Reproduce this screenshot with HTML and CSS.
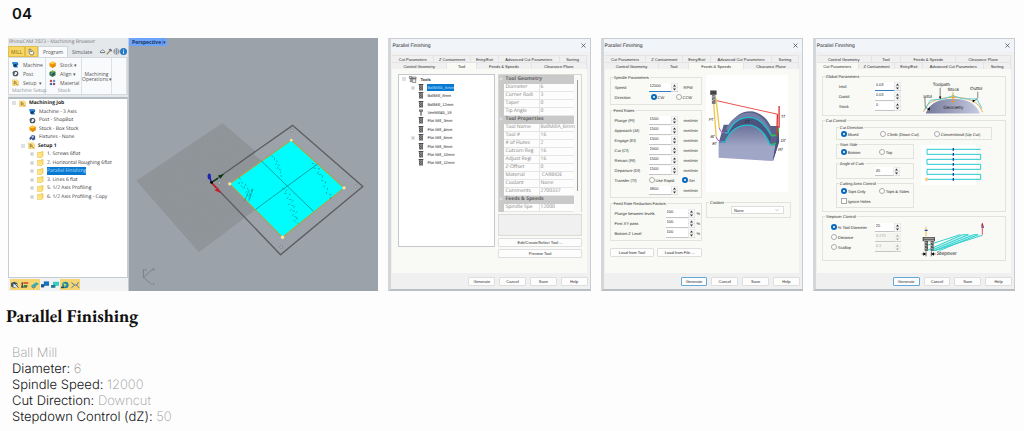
FILE: index.html
```html
<!DOCTYPE html>
<html lang="en">
<head>
<meta charset="utf-8">
<title>04 Parallel Finishing</title>
<link rel="stylesheet" href="styles.css">
</head>
<body>
<svg class="defs" aria-hidden="true">
  <symbol id="machine" viewBox="0 0 16 16"><path d="M1 2h9l4 2v5l-3 1 3 4-8 1-4-3 1-3-2-2z" fill="#1769b5"/><path d="M3 3h8v3H3z" fill="#43a5e6"/><path d="M3 10l5-3 3 3-4 3z" fill="#12345c"/></symbol>
  <symbol id="post" viewBox="0 0 16 16"><circle cx="8" cy="8" r="5" fill="none" stroke="#4d5564" stroke-width="3"/><path d="M1 5l5-3 2 4-4 4zM9 9l5 1-3 4z" fill="#59616e"/><circle cx="9" cy="7" r="2.500" fill="#eef1f6"/></symbol>
  <symbol id="box" viewBox="0 0 16 16"><path d="M1 5l7-4 7 3v8l-7 4-7-4z" fill="#f5a312"/><path d="M1 5l7 3 7-4v8l-7 4z" fill="#e88b06"/><path d="M1 5l7-4 7 3-7 4z" fill="#ffc84a"/></symbol>
  <symbol id="align" viewBox="0 0 16 16"><path d="M1 5l7-4 7 3v8l-7 4-7-4z" fill="#3b7d3e"/><path d="M4 6h8v6H4z" fill="#254a67"/><path d="M2 4l6-3 6 3-6 2z" fill="#84b440"/><circle cx="6" cy="8" r="2" fill="#4fa8d8"/></symbol>
  <symbol id="setup" viewBox="0 0 16 16"><path d="M1 2h10l4 3v10H1z" fill="#ffe286" stroke="#ebb83c"/><path d="M5 5l5 3-5 4zM9 11l4 2" fill="none" stroke="#6f5625" stroke-width="1.500"/></symbol>
  <symbol id="material" viewBox="0 0 16 16"><path d="M2 2h5v5H2z" fill="#d84747"/><path d="M9 2h5v5H9z" fill="#5a91d2"/><path d="M2 9h5v5H2z" fill="#4768a9"/><path d="M9 9h5v5H9z" fill="#8d4c81"/></symbol>
  <symbol id="fixture" viewBox="0 0 16 16"><path d="M1 9l6-7 7 2v8l-5 3-3-4-4 3z" fill="#344b84"/><path d="M5 6l4-3 3 4-4 3z" fill="#aebbe0"/></symbol>
  <symbol id="folder" viewBox="0 0 16 16"><path d="M1 3h8l1-2h4v11l-3 3H1z" fill="#f8d668" stroke="#e5bc43"/><path d="M2 5h9v9H2z" fill="#ffe384"/></symbol>
  <symbol id="plus" viewBox="0 0 10 10"><path d="M1 1h8v8H1z" fill="#fff" stroke="#b5b9c0"/><path d="M2.500 5h5M5 2.500v5" stroke="#65707f"/></symbol>
  <symbol id="minus" viewBox="0 0 10 10"><path d="M1 1h8v8H1z" fill="#fff" stroke="#a5a9b0"/><path d="M2.500 5h5" stroke="#55606f"/></symbol>
  <symbol id="mill" viewBox="0 0 14 18"><path d="M1 0h12v3H1zM2 4h10v13H2z" fill="#484848"/><path d="M3 9l7-5M3 14l8-6M6 17l5-4" stroke="#e6e6e6" stroke-width="1.500"/></symbol>
  <symbol id="vee" viewBox="0 0 14 18"><path d="M2 1h10v6H9v9l-2 2-2-2V7H2z" fill="#666"/><path d="M5 2v4M9 2v4M7 8v7" stroke="#eee"/></symbol>
  <symbol id="tools" viewBox="0 0 20 18"><path d="M1 1h6v5H1zM3 6h3v9H3zM8 3h10v4H8zM9 7h8v10H9z" fill="#eee" stroke="#444" stroke-width="1.500"/></symbol>
  <symbol id="spin" viewBox="0 0 14 18"><path d="M.5.500h13v17H.5z" fill="#f8f8f8" stroke="#d0d0d0"/><path d="M0 9h14" stroke="#d5d5d5"/><path d="M7 3l3 4H4zM7 15l3-4H4z" fill="#333"/></symbol>
  <symbol id="close" viewBox="0 0 10 10"><path d="M1 1l8 8M9 1L1 9" stroke="#333" stroke-width="1.300"/></symbol>
</svg>

<p class="page-no">04</p>

<main class="shots">
  <section class="cam">
    <div class="browser">
      <p class="browser-title">RhinoCAM 2023 - Machining Browser</p>
      <nav class="ribbon-tabs">
        <button class="mill-tab">MILL</button>
        <button class="mill-tab"><svg viewBox="0 0 20 20"><path d="M3 2h5v8l5-3 4 5-3 6H8l-4-5z" fill="#fff" stroke="#4c5a70" stroke-width="2"/></svg></button>
        <button class="active">Program</button>
        <button>Simulate</button>
        <span class="tool-icons">
          <svg viewBox="0 0 20 20"><path d="M4 13V9l6-4 6 4v4zM3 13h14" fill="none" stroke="#68717d" stroke-width="2"/></svg>
          <svg viewBox="0 0 20 20"><path d="M2 18L12 7" stroke="#9c7a3f" stroke-width="3"/><path d="M7 3l7-1 4 6-4 3-3-4z" fill="#697383"/></svg>
          <svg viewBox="0 0 20 20"><circle cx="10" cy="10" r="8" fill="#eef0f2" stroke="#777f88" stroke-width="2"/><path d="M4 8h12v4H4zM10 2v16" fill="none" stroke="#777f88" stroke-width="2"/></svg>
          <svg viewBox="0 0 20 20"><circle cx="10" cy="10" r="10" fill="#2379ca"/><path d="M10 4v3M10 9v7" stroke="#fff" stroke-width="2.500"/></svg>
        </span>
      </nav>
      <div class="ribbon">
        <div class="ribbon-group">
          <button><svg><use href="#machine"/></svg>Machine</button>
          <button><svg><use href="#post"/></svg>Post</button>
          <button><svg><use href="#setup"/></svg>Setup&nbsp; ▾</button>
          <span class="group-name">Machine Setup</span>
        </div>
        <div class="ribbon-group">
          <button><svg><use href="#box"/></svg>Stock ▾</button>
          <button><svg><use href="#align"/></svg>Align ▾</button>
          <button><svg><use href="#material"/></svg>Material</button>
          <span class="group-name">Stock</span>
        </div>
        <div class="ribbon-group ops"><button>Machining<br>Operations ▾</button></div>
        <div class="ribbon-group"></div>
      </div>
      <ul class="job-tree">
        <li class="strong"><svg class="exp"><use href="#minus"/></svg><svg><use href="#setup"/></svg><span>Machining Job</span></li>
        <li class="l1"><svg><use href="#machine"/></svg><span>Machine - 3 Axis</span></li>
        <li class="l1"><svg><use href="#post"/></svg><span>Post - ShopBot</span></li>
        <li class="l1"><svg><use href="#box"/></svg><span>Stock - Box Stock</span></li>
        <li class="l1"><svg><use href="#fixture"/></svg><span>Fixtures - None</span></li>
        <li class="l1 strong has-exp"><svg class="exp"><use href="#minus"/></svg><svg><use href="#setup"/></svg><span>Setup 1</span></li>
        <li class="l2"><svg class="exp"><use href="#plus"/></svg><svg><use href="#folder"/></svg><span>1. Screws 6flat</span></li>
        <li class="l2"><svg class="exp"><use href="#plus"/></svg><svg><use href="#folder"/></svg><span>2. Horizontal Roughing 6flat</span></li>
        <li class="l2"><svg class="exp"><use href="#plus"/></svg><svg><use href="#folder"/></svg><span class="picked">Parallel Finishing</span></li>
        <li class="l2"><svg class="exp"><use href="#plus"/></svg><svg><use href="#folder"/></svg><span>3. Lines 6 flat</span></li>
        <li class="l2"><svg class="exp"><use href="#plus"/></svg><svg><use href="#folder"/></svg><span>5. 1/2 Axis Profiling</span></li>
        <li class="l2"><svg class="exp"><use href="#plus"/></svg><svg><use href="#folder"/></svg><span>6. 1/2 Axis Profiling - Copy</span></li>
      </ul>
      <div class="status-tools">
        <button class="on"><svg viewBox="0 0 24 20"><path d="M2 5l8-3 8 3v9l-8 4-8-4z" fill="#46586b"/><path d="M8 8h9v8H8z" fill="#d8e7ef"/><path d="M10 5l11 12" stroke="#345" stroke-width="2"/></svg></button>
        <button class="on"><svg viewBox="0 0 24 20"><path d="M2 15h15M5 3v14" stroke="#334" stroke-width="3"/><path d="M8 3h12v4H8z" fill="#d2452c"/><path d="M9 10h9v5H9z" fill="#358348"/></svg></button>
        <button class="on"><svg viewBox="0 0 24 20"><path d="M2 12L15 3l7 4-13 10z" fill="#3aabb3"/><path d="M3 14l5 4 6-4" stroke="#566" stroke-width="2" fill="none"/></svg></button>
        <button><svg viewBox="0 0 24 20"><path d="M9 1h13v11H9z" fill="#1672bb"/><path d="M2 8h8v8H2z" fill="#245084"/></svg></button>
        <button><svg viewBox="0 0 24 20"><path d="M7 2h15v10H7z" fill="#35cfc1"/><path d="M2 10h11v7H2z" fill="#247b91"/></svg></button>
        <button class="on"><svg viewBox="0 0 24 20"><circle cx="13" cy="10" r="8" fill="#2286a1"/><path d="M8 5l8 3-5 8z" fill="#b6dc73"/><path d="M2 14h8v4H2z" fill="#345"/></svg></button>
        <button class="on"><svg viewBox="0 0 24 20"><path d="M3 4l8 6-8 7M11 10h5l5-7M16 10l6 7" fill="none" stroke="#52749a" stroke-width="2.500"/></svg></button>
      </div>
    </div>
    <div class="viewport">
      <button class="view-name">Perspective <span>▾</span></button>
      <svg viewBox="13 25 744 753" preserveAspectRatio="xMidYMid slice" role="img" aria-label="Perspective view of the part">
        <defs>
          <pattern id="mesh" width="8" height="8" patternUnits="userSpaceOnUse" patternTransform="matrix(.82 -.56 .72 .8 0 0)"><rect width="8" height="8" fill="#91969b"/><path d="M0 0h8M0 0v8" stroke="#858a8f"/></pattern>
        </defs>
        <path d="M36 450L292 278L500 455L222 663Z" fill="url(#mesh)"/>
        <path d="M259 455L501 285L710 467L465 670Z" fill="#9ba2aa" />
        <path d="M259 455L382 369L412 392L314 459L390 536L360 558Z" fill="#8f9499"/>
        <path d="M259 455L501 285L710 467L465 670Z" fill="none" stroke="#5d5c61" stroke-width="4"/>
        <path d="M497 329L654 471L471 618L314 459Z" fill="#00fdfd" stroke="#b6a13c" stroke-width="3"/>
        <path d="M409 392L563 541M571 403L391 535" stroke="#078f92" stroke-width="2.500"/>
        <g fill="none" stroke="#007f86" stroke-width="1.600">
          <path d="M438 376l9 3 0 10 10 4-7 9 12 2-8 10 13 3-3 12 7 13" stroke-dasharray="7 5"/>
          <path d="M470 472l14 4-8 11 18 3-10 14 20 4-15 13 21 4-17 13 22 4-16 12 19 6-14 8 14 9" stroke-dasharray="8 6"/>
          <path d="M558 398l16 3-9 12 16 1-7 17 17 1-4 17 13 4-7 13 13 7-5 15 15 4-3 13" stroke-dasharray="8 6"/>
          <path d="M342 440l10 17-12-1 16 18 4-15 10 20-9 5 9 14 12-26-12 32 12-7" stroke-dasharray="8 6"/>
          <path d="M372 478l-14 32M383 475l-12 35"/>
        </g>
        <g fill="#ffe3a0"><circle cx="497" cy="329" r="4"/><circle cx="654" cy="471" r="5"/><circle cx="471" cy="618" r="5"/><circle cx="314" cy="459" r="5"/></g>
        <g fill="#c3c5c9" stroke="#747980" stroke-width="2"><circle cx="499" cy="300" r="4"/><circle cx="688" cy="467" r="4"/><circle cx="467" cy="647" r="4"/><circle cx="283" cy="456" r="4"/></g>
        <path d="M259 455l-5-18" stroke="#2727a5" stroke-width="5"/><ellipse cx="253" cy="437" rx="5" ry="9" fill="#2424b4"/>
        <path d="M259 455l20-12" stroke="#073e12" stroke-width="4"/><path d="M297 430l-11 14-7-10z" fill="#06370d"/>
        <path d="M259 455l15 16" stroke="#c92026" stroke-width="5"/><path d="M289 487l-20-8 9-10z" fill="#cb2027"/><circle cx="260" cy="455" r="4"/>
        <path d="M57 713v24l24 21M57 737l28-24" fill="none" stroke="#6c7177" stroke-width="2"/>
        <g class="axis"><text x="60" y="717">z</text><text x="85" y="716">y</text><text x="84" y="759">x</text></g>
      </svg>
    </div>
  </section>

  <section class="dialog">
    <header><h2>Parallel Finishing</h2><button aria-label="Close"><svg><use href="#close"/></svg></button></header>
    <nav class="tabs"><div class="five"><button>Cut Parameters</button><button>Z Containment</button><button>Entry/Exit</button><button>Advanced Cut Parameters</button><button>Sorting</button></div><div class="four"><button>Control Geometry</button><button class="active">Tool</button><button>Feeds &amp; Speeds</button><button>Clearance Plane</button></div></nav>
    <div class="pane tool-pane">
      <div class="tool-box"><ul class="tool-tree">
        <li class="root"><svg class="exp"><use href="#minus"/></svg><svg class="wide"><use href="#tools"/></svg><span>Tools</span></li>
        <li><svg class="exp"><use href="#plus"/></svg><svg><use href="#mill"/></svg><span class="picked">BallMillA_6mm</span></li>
        <li><svg class="exp"></svg><svg><use href="#mill"/></svg><span>BallMill_8mm</span></li>
        <li><svg class="exp"></svg><svg><use href="#mill"/></svg><span>BallMill_12mm</span></li>
        <li><svg class="exp"></svg><svg><use href="#vee"/></svg><span>VeeMill45_19</span></li>
        <li><svg class="exp"></svg><svg><use href="#mill"/></svg><span>Flat Mill_3mm</span></li>
        <li><svg class="exp"></svg><svg><use href="#mill"/></svg><span>Flat Mill_4mm</span></li>
        <li><svg class="exp"><use href="#plus"/></svg><svg><use href="#mill"/></svg><span>Flat Mill_6mm</span></li>
        <li><svg class="exp"></svg><svg><use href="#mill"/></svg><span>Flat Mill_8mm</span></li>
        <li><svg class="exp"></svg><svg><use href="#mill"/></svg><span>Flat Mill_10mm</span></li>
        <li><svg class="exp"></svg><svg><use href="#mill"/></svg><span>Flat Mill_12mm</span></li>
      </ul></div>
      <div class="tool-side">
        <div class="props-wrap">
        <table class="props">
          <tr class="sec"><th><svg><use href="#minus"/></svg></th><th colspan="2">Tool Geometry</th></tr>
          <tr><th></th><td>Diameter</td><td>6</td></tr>
          <tr><th></th><td>Corner Radi</td><td>3</td></tr>
          <tr><th></th><td>Taper</td><td>0</td></tr>
          <tr><th></th><td>Tip Angle</td><td>0</td></tr>
          <tr class="sec"><th><svg><use href="#minus"/></svg></th><th colspan="2">Tool Properties</th></tr>
          <tr><th></th><td>Tool Name</td><td>BallMillA_6mm</td></tr>
          <tr><th></th><td>Tool #</td><td>16</td></tr>
          <tr><th></th><td># of Flutes</td><td>2</td></tr>
          <tr><th></th><td>Cutcom Reg</td><td>16</td></tr>
          <tr><th></th><td>Adjust Regi</td><td>16</td></tr>
          <tr><th></th><td>Z-Offset</td><td>0</td></tr>
          <tr><th></th><td>Material</td><td>&nbsp;CARBIDE</td></tr>
          <tr><th></th><td>Coolant</td><td>None</td></tr>
          <tr><th></th><td>Comments</td><td>2700337</td></tr>
          <tr class="sec"><th><svg><use href="#minus"/></svg></th><th colspan="2">Feeds &amp; Speeds</th></tr>
          <tr><th></th><td>Spindle Spe</td><td>12000</td></tr>
        </table><div class="scroll"></div></div>
        <div class="note"></div>
        <button class="btn">Edit/Create/Select Tool ...</button>
        <button class="btn">Preview Tool</button>
      </div>
    </div>
    <footer><button class="btn">Generate</button><button class="btn">Cancel</button><button class="btn">Save</button><button class="btn">Help</button></footer>
  </section>

  <section class="dialog">
    <header><h2>Parallel Finishing</h2><button aria-label="Close"><svg><use href="#close"/></svg></button></header>
    <nav class="tabs"><div class="five"><button>Cut Parameters</button><button>Z Containment</button><button>Entry/Exit</button><button>Advanced Cut Parameters</button><button>Sorting</button></div><div class="four"><button>Control Geometry</button><button>Tool</button><button class="active">Feeds &amp; Speeds</button><button>Clearance Plane</button></div></nav>
    <div class="pane feeds-pane">
      <div class="feeds-left">
        <fieldset class="rates"><legend>Spindle Parameters</legend>
          <div class="row"><label for="speed">Speed</label><span class="num focus"><input id="speed" value="12000"><svg><use href="#spin"/></svg></span><span>RPM</span></div>
          <div class="row pick"><span>Direction</span><label><input type="radio" name="dir" checked>CW</label><label><input type="radio" name="dir">CCW</label></div>
        </fieldset>
        <fieldset class="rates"><legend>Feed Rates</legend>
          <div class="row"><label for="pf">Plunge (Pf)</label><span class="num"><input id="pf" value="1500"><svg><use href="#spin"/></svg></span><span>mm/min</span></div>
          <div class="row"><label for="af">Approach (Af)</label><span class="num"><input id="af" value="1500"><svg><use href="#spin"/></svg></span><span>mm/min</span></div>
          <div class="row"><label for="ef">Engage (Ef)</label><span class="num"><input id="ef" value="1500"><svg><use href="#spin"/></svg></span><span>mm/min</span></div>
          <div class="row"><label for="cf">Cut (Cf)</label><span class="num"><input id="cf" value="2000"><svg><use href="#spin"/></svg></span><span>mm/min</span></div>
          <div class="row"><label for="rf">Retract (Rf)</label><span class="num"><input id="rf" value="1500"><svg><use href="#spin"/></svg></span><span>mm/min</span></div>
          <div class="row"><label for="df">Departure (Df)</label><span class="num"><input id="df" value="1500"><svg><use href="#spin"/></svg></span><span>mm/min</span></div>
          <div class="row pick far"><span>Transfer (Tf)</span><label><input type="radio" name="tf">Use Rapid</label><label><input type="radio" name="tf" checked>Set</label></div>
          <div class="row"><span></span><span class="num"><input aria-label="Transfer feed" value="4800"><svg><use href="#spin"/></svg></span><span>mm/min</span></div>
        </fieldset>
        <fieldset class="rates factors"><legend>Feed Rate Reduction Factors</legend>
          <div class="row"><label for="pl">Plunge between levels</label><span class="num"><input id="pl" value="100"><svg><use href="#spin"/></svg></span><span>%</span></div>
          <div class="row"><label for="xy">First XY pass</label><span class="num"><input id="xy" value="100"><svg><use href="#spin"/></svg></span><span>%</span></div>
          <div class="row"><label for="bz">Bottom Z Level</label><span class="num"><input id="bz" value="100"><svg><use href="#spin"/></svg></span><span>%</span></div>
        </fieldset>
        <div class="loads"><button class="btn">Load from Tool</button><button class="btn">Load from File ...</button></div>
      </div>
      <div class="feeds-right">
        <svg class="diagram" viewBox="18 -24 243 348" role="img" aria-label="Feed rate diagram">
          <defs><linearGradient id="face" x2="0" y2="1"><stop stop-color="#69719a"/><stop offset=".6" stop-color="#a0a6c5"/></linearGradient></defs>
          <path d="M18-24h243v348H18z" fill="#fff"/>
          <path d="M56 176L70 124h22C105 95 125 84 148 84S198 100 210 128h24l1 45-18 59-20-40-140-5z" fill="#59628b"/>
          <path d="M78 135C96 100 120 88 146 88S192 106 206 134l10 25C196 118 172 103 147 103S98 116 83 148z" fill="#757ea5"/>
          <path d="M82 150C97 115 122 102 147 102S195 125 212 156l-4 28C195 150 172 125 143 125S90 138 74 175z" fill="#4b547d"/>
          <path d="M55 177h20C90 139 115 125 143 125S195 150 208 185h16l-8 47-161-10z" fill="url(#face)"/>
          <path d="M234 130l1 45-18 57 7-47z" fill="#4a5480"/>
          <path d="M74 148h9C97 115 122 102 147 102S195 125 212 156h10M62 175h12C90 138 115 125 143 125S195 150 208 183h14" fill="none" stroke="#20c1d1" stroke-width="4"/>
          <path d="M47 52L231 93" stroke="#ef5550" stroke-width="3"/><path d="M235 68v65M230 93l-2 64" stroke="#df3133" stroke-width="4"/>
          <path d="M47 45l10 88M40 55l8 106" stroke="#ebc64b" stroke-width="4"/>
          <path d="M57 133q4 14 17 15M48 161q4 13 16 14" fill="none" stroke="#a760c9" stroke-width="3"/>
          <path d="M210 156l17-1M213 182l13-2M233 133v14" stroke="#25c24a" stroke-width="4"/>
          <path d="M30 22h19v13H30z" fill="#444"/><path d="M35 34h11v28H35z" fill="#777"/><path d="M35 43l11-6M35 53l11-7" stroke="#ddd" stroke-width="2"/>
          <g class="diagram-text"><text x="26" y="113">Pf</text><text x="30" y="162">Af</text><text x="36" y="185">Ef</text><text x="133" y="119">Cf</text><text x="240" y="103">Tf</text><text x="240" y="175">Df</text><text x="232" y="201">Rf</text></g>
        </svg>
        <fieldset class="coolant"><legend>Coolant</legend><div class="select"><select aria-label="Coolant"><option>None</option></select><svg viewBox="0 0 10 10"><path d="M1 3l4 4 4-4" fill="none" stroke="#777"/></svg></div></fieldset>
      </div>
    </div>
    <footer><button class="btn default">Generate</button><button class="btn">Cancel</button><button class="btn">Save</button><button class="btn">Help</button></footer>
  </section>

  <section class="dialog">
    <header><h2>Parallel Finishing</h2><button aria-label="Close"><svg><use href="#close"/></svg></button></header>
    <nav class="tabs"><div class="four"><button>Control Geometry</button><button>Tool</button><button>Feeds &amp; Speeds</button><button>Clearance Plane</button></div><div class="five"><button class="active">Cut Parameters</button><button>Z Containment</button><button>Entry/Exit</button><button>Advanced Cut Parameters</button><button>Sorting</button></div></nav>
    <div class="pane cut-pane">
      <fieldset class="global"><legend>Global Parameters</legend>
        <div class="fields">
          <div class="row"><label for="intol">Intol</label><span class="num focus"><input id="intol" value="0.03"><svg><use href="#spin"/></svg></span></div>
          <div class="row"><label for="outtol">Outtol</label><span class="num"><input id="outtol" value="0.03"><svg><use href="#spin"/></svg></span></div>
          <div class="row"><label for="stock">Stock</label><span class="num"><input id="stock" value="0"><svg><use href="#spin"/></svg></span></div>
        </div>
        <svg viewBox="325 128 210 108" role="img" aria-label="Tolerance diagram">
          <defs><linearGradient id="dome"><stop stop-color="#75799b"/><stop offset="1" stop-color="#c7cbe0"/></linearGradient></defs>
          <path d="M341 234q15-48 89-48 70 0 88 48z" fill="url(#dome)"/>
          <path d="M334 229q8-44 98-48 80 0 95 49" fill="none" stroke="#edab43" stroke-width="3"/>
          <path d="M338 222l18-31 44-5 30-10 31 10 47 1 17 31" fill="none" stroke="#47cbdc" stroke-width="3"/>
          <path d="M338 180l1 31 9 10M388 150v31M511 163v20l-10 10" fill="none" stroke="#333" stroke-width="2"/><path d="M346 220l9-6-2 11zM384 179h8l-4 9zM503 190l-8 9-1-9z"/>
          <path d="M430 165v34M425 181h11M425 195h11" stroke="#e69b20" stroke-width="3"/>
          <g class="diagram-text big"><text x="364" y="143">Toolpath</text><text x="412" y="161">Stock</text><text x="486" y="157">Outtol</text><text x="333" y="182">Intol</text><text x="398" y="221">Geometry</text></g>
        </svg>
      </fieldset>
      <fieldset class="control"><legend>Cut Control</legend>
        <fieldset class="direction"><legend>Cut Direction</legend><label><input type="radio" name="cut" checked>Mixed</label><label><input type="radio" name="cut">Climb (Down Cut)</label><label><input type="radio" name="cut">Conventional (Up Cut)</label></fieldset>
        <div class="control-cols">
          <div class="control-left">
            <fieldset class="pair"><legend>Start Side</legend><label><input type="radio" name="side" checked>Bottom</label><label><input type="radio" name="side">Top</label></fieldset>
            <fieldset class="angle"><legend>Angle of Cuts</legend><span class="num"><input aria-label="Angle of Cuts" value="45"><svg><use href="#spin"/></svg></span></fieldset>
            <fieldset class="pair area"><legend>Cutting Area Control</legend><label><input type="radio" name="area" checked>Tops Only</label><label><input type="radio" name="area">Tops &amp; Sides</label><label><input type="checkbox">Ignore Holes</label></fieldset>
          </div>
          <svg viewBox="0 0 183 120" role="img" aria-label="Zigzag cut pattern"><path d="M0 0h165v120H0z" fill="#fff"/><path d="M179 13H18v15h161v15H18v15h161v15H18v15h161v15H18" fill="none" stroke="#27cbd2" stroke-width="3"/><path d="M97 9v8M97 24v8M97 39v8M97 54v8M97 69v8M97 84v8M97 99v8" stroke="#1b3b9b" stroke-width="4"/><circle cx="17" cy="103" r="4" fill="#ffe4aa" stroke="#e8ae47" stroke-width="2"/></svg>
        </div>
      </fieldset>
      <fieldset class="stepover"><legend>Stepover Control</legend>
        <div class="fields">
          <div class="row"><label><input type="radio" name="step" checked>% Tool Diameter</label><span class="num"><input aria-label="Percent tool diameter" value="25"><svg><use href="#spin"/></svg></span></div>
          <div class="row"><label><input type="radio" name="step">Distance</label><span class="num off"><input aria-label="Distance" value="3.175" disabled><svg><use href="#spin"/></svg></span></div>
          <div class="row"><label><input type="radio" name="step">Scallop</label><span class="num off"><input aria-label="Scallop" value="0.1" disabled><svg><use href="#spin"/></svg></span></div>
        </div>
        <svg viewBox="325 180 210 108" role="img" aria-label="Stepover diagram">
          <path d="M350 266l108-48h60l-137 48z" fill="#b9f1ef"/>
          <path d="M350 266l108-48h18l-110 47h12l114-47h13l-116 48M518 220l-144 46M352 250l100-32" fill="none" stroke="#35d1cf" stroke-width="3"/>
          <path d="M339 225h37v13h-4v28h-9v-28h-8v28h-10v-28h-6z" fill="#555"/><path d="M345 240l8 4M345 249l8 4M345 258l8 4M363 240l8 4M363 249l8 4M363 258l8 4M343 229h30M343 235h30" stroke="#ddd" stroke-width="2"/>
          <path d="M349 194v29" stroke="#ebbf48" stroke-width="3"/><path d="M345 205h9M515 195h8" stroke="#244cb0" stroke-width="4"/><path d="M518 183v35" stroke="#df4c5a" stroke-width="3"/><path d="M518 183l4 8h-8z" fill="#b32939"/>
          <path d="M336 276h12M364 276h14M349 268v15M365 268v15" stroke="#222" stroke-width="2"/><path d="M349 276l-8-5v10zM365 276l8-5v10z"/>
          <g class="diagram-text big"><text x="381" y="280">Stepover</text></g>
        </svg>
      </fieldset>
    </div>
    <footer><button class="btn default">Generate</button><button class="btn">Cancel</button><button class="btn">Save</button><button class="btn">Help</button></footer>
  </section>
</main>

<section class="summary">
  <h1>Parallel Finishing</h1>
  <dl>
    <div><dd>Ball Mill</dd></div>
    <div><dt>Diameter:</dt> <dd>6</dd></div>
    <div><dt>Spindle Speed:</dt> <dd>12000</dd></div>
    <div><dt>Cut Direction:</dt> <dd>Downcut</dd></div>
    <div><dt>Stepdown Control (dZ):</dt> <dd>50</dd></div>
  </dl>
</section>
</body>
</html>
```

FILE: styles.css
```css
* { box-sizing: border-box; }
body { margin: 0; background: #fdfdfd; color: #111; font-family: Inter, "Liberation Sans", sans-serif; text-rendering: geometricPrecision; }
button, input, select { font: inherit; color: inherit; margin: 0; padding: 0; border: 0; background: none; min-width: 0; }
ul, dl, dd, p, h1, h2 { margin: 0; padding: 0; }
ul { list-style: none; }
svg { display: block; }
.defs { position: absolute; width: 0; height: 0; }

.page-no { padding: 4px 12px 0; font-size: 15px; line-height: 20px; font-weight: 600; }
.shots { display: grid; grid-template-columns: 370fr 202fr 202fr 202fr; gap: 10px; padding: 14px 9px 0 8px; }

/* CAM browser and viewport */
.cam { display: grid; grid-template-columns: 120fr 249fr; gap: 1px; background: #c3ccd2; font: 5px/6px "Open Sans", sans-serif; color: #333; }
.browser { display: flex; flex-direction: column; background: #e5e8eb; min-width: 0; }
.browser-title { height: 8px; padding: 1px 0 0 1px; color: #777; white-space: nowrap; }
.ribbon-tabs { display: flex; height: 11px; align-items: stretch; }
.ribbon-tabs > button { padding: 0 4px; color: #555; }
.ribbon-tabs > .mill-tab { background: #f7d664; color: #8a6a16; padding: 0 2px; border: 1px solid #e3bd4a; }
.mill-tab svg { width: 7px; height: 8px; }
.ribbon-tabs > .active { background: #fafbfc; border: 1px solid #cfd4d9; border-bottom: 0; }
.tool-icons { display: flex; flex: 1; align-items: center; justify-content: space-between; padding: 0 1px 0 3px; }
.tool-icons svg { width: 7px; height: 7px; }
.ribbon { display: flex; height: 38px; background: #f9fafb; border: 1px solid #d5d9dd; margin-bottom: 2px; color: #555; }
.ribbon-group { display: flex; flex-direction: column; padding: 2px 2px 0 3px; border-right: 1px solid #dde0e4; width: 37px; }
.ribbon-group + .ribbon-group { width: 36px; }
.ribbon-group button { display: flex; align-items: center; gap: 4px; height: 9px; white-space: nowrap; }
.ribbon-group svg { width: 7px; height: 7px; flex: none; }
.group-name { text-align: center; white-space: nowrap; color: #8a8f96; padding-top: 1px; }
.ribbon .ops { width: 30px; padding: 14px 0 0; }
.ribbon .ops button { text-align: center; line-height: 5px; display: block; }
.job-tree { flex: 1; background: #fff; border: 1px solid #c5ccd2; border-top: 2px solid #b5bdc4; display: grid; grid-auto-rows: minmax(0, 1fr); padding-bottom: 76px; }
.job-tree li { display: flex; align-items: center; gap: 3px; padding-left: 3px; white-space: nowrap; }
.job-tree .l1 { padding-left: 20px; }
.job-tree .has-exp { padding-left: 12px; }
.job-tree .l2 { padding-left: 21px; }
.job-tree li svg { width: 7px; height: 7px; flex: none; }
.job-tree li .exp { width: 4px; height: 4px; }
.strong { font-weight: 700; color: #222; }
.picked { background: #0878d1; color: #b9e0ff; padding: 1px 0; }
.status-tools { display: flex; align-items: center; height: 13px; padding: 0 2px; background: #f0f2f4; }
.status-tools button { flex: 0 0 10px; height: 11px; padding: 1px 0; }
.status-tools .on { background: #f7d672; }
.status-tools svg { width: 10px; height: 8px; }
.viewport { position: relative; background: #9ba2aa; min-width: 0; }
.viewport > svg { width: 100%; height: 100%; }
.view-name { position: absolute; top: 0; left: 0; height: 8px; padding: 0 1px 0 3px; background: #6ba4fa; color: #1d3460; font-weight: 700; }
.view-name span { font-weight: 400; border-left: 1px solid #578ddd; }
.axis { font: 12px "Liberation Sans", sans-serif; fill: #666b70; }

/* Dialogs */
.dialog { display: flex; flex-direction: column; min-width: 0; min-height: 253px; background: #f0f0f0; border: 1px solid #c9cdd1; border-left: 3px solid #d3d7da; border-bottom: 2px solid #b9bec2; font: 4px/5px "Liberation Sans", sans-serif; color: #2c2c2c; }
.dialog header { display: flex; justify-content: space-between; align-items: center; height: 13px; padding: 0 4px 0 1px; background: #f1f4f9; }
.dialog h2 { font: 5px/6px "Liberation Sans", sans-serif; }
.dialog header svg { width: 5px; height: 5px; }
.tabs { padding: 3px 3px 0 1px; }
.tabs div { display: grid; height: 7px; }
.tabs .five { grid-template-columns: 42fr 37fr 28fr 61fr 27fr; }
.tabs .four { grid-template-columns: 55fr 30fr 55fr 55fr; }
.tabs button { white-space: nowrap; border: 1px solid #e4e4e4; border-width: 1px 1px 0 0; }
.tabs .active { background: #f9faf5; }
.pane { flex: 1; margin: 0 3px 0 1px; background: #f9faf5; }
.dialog footer { display: grid; grid-template-columns: 27fr 27fr 27fr 27fr; gap: 4px; padding: 4px 2px 3px 77px; }
.btn { height: 9px; background: #fdfdfd; border: 1px solid #dedede; border-radius: 1px; white-space: nowrap; }
.btn.default { border-color: #62a8d8; }
fieldset { --inset: 0px; margin: 0; padding: 0 0 0 var(--inset); min-width: 0; border: 1px solid #e2e3de; }
legend { margin-left: calc(2px - var(--inset)); padding: 0 1px; height: 5px; line-height: 5px; white-space: nowrap; }

.tool-pane { display: grid; grid-template-columns: 97fr 83fr; gap: 3px; padding: 5px 5px 15px 6px; }
.tool-box { background: #fff; border: 1px solid #c5c8cc; margin-bottom: 11px; }
.tool-tree { display: grid; height: 92px; grid-auto-rows: 1fr; }
.tool-tree li { display: flex; align-items: center; gap: 3px; padding-left: 12px; }
.tool-tree .root { padding-left: 3px; font-weight: 700; }
.tool-tree svg { width: 6px; height: 7px; }
.tool-tree .exp { width: 4px; height: 4px; }
.tool-tree .wide { width: 8px; }
.tool-side { display: flex; flex-direction: column; gap: 2px; min-width: 0; }
.props-wrap { display: grid; grid-template-columns: 75fr 7fr; border: 1px solid #d7d7d7; border-bottom: 0; overflow: hidden; }
.props { border-collapse: collapse; table-layout: fixed; width: 100%; font: 5px/6px "Open Sans", sans-serif; color: #838383; background: #fdfdfd; }
.props tr { height: 8px; }
.props td, .props th { padding: 0 0 0 1px; border-bottom: 1px solid #e5e5e5; white-space: nowrap; overflow: hidden; line-height: 6px; text-align: left; }
.props td:last-child { border-left: 1px solid #e5e5e5; overflow: visible; }
.props th { background: #c9c9c9; border-color: #c9c9c9; color: #666; }
.props tr th:first-child { width: 5px; padding: 0; }
.props td:nth-child(2) { width: 26px; }
.props svg { width: 4px; height: 4px; }
.props .sec th { border-bottom: 1px solid #c9c9c9; }
.scroll { border-right: 1px solid #999; margin: 5px 3px 21px 0; }
.note { height: 22px; background: #f0f0f0; border: 1px solid #d9dcd9; }

.row { display: grid; align-items: center; height: 10px; white-space: nowrap; }
.num { display: flex; height: 9px; min-width: 0; border-bottom: 1px solid #c5c5c5; background: #fff; }
.num input { flex: 1; width: 0; padding: 0 1px 2px; }
.num svg { width: 7px; height: 9px; flex: none; }
.num.focus { border-bottom-color: #3480c5; }
.num.off { color: #aaa; background: #f5f5f2; }
.off svg { opacity: 0.4; }
label { display: flex; align-items: center; gap: 1px; white-space: nowrap; }
input[type="radio"], input[type="checkbox"] { appearance: none; width: 6px; height: 6px; flex: none; border: 1px solid #aaa; background: #fff; }
input[type="radio"] { border-radius: 50%; }
input[type="radio"]:checked { border: 2px solid #0869bd; }

.feeds-pane { display: grid; grid-template-columns: 94fr 86fr; gap: 4px; padding: 6px 8px 0 5px; }
.feeds-left { display: flex; flex-direction: column; gap: 3px; }
.rates { --inset: 4px; padding-top: 2px; padding-bottom: 2px; }
.rates .row { grid-template-columns: 34px 29px 1fr; column-gap: 0; }
.rates .row > :last-child { padding-left: 6px; }
.rates .pick { grid-template-columns: 36px 25px 1fr; }
.rates .pick > :last-child { padding-left: 0; }
.rates .far { grid-template-columns: 34px 33px 1fr; }
.factors .row { grid-template-columns: 51px 29px 1fr; }
.factors .row > :last-child { padding-left: 2px; }
.loads { display: grid; grid-template-columns: 1fr 1fr; gap: 3px; padding-top: 4px; }
.feeds-right { display: flex; flex-direction: column; gap: 8px; }
.diagram { width: 82px; height: 117px; }
.diagram-text { font: italic 13px "Liberation Sans", sans-serif; fill: #222; }
.diagram-text.big { font-style: normal; font-size: 15px; }
.coolant { --inset: 24px; padding-top: 1px; padding-right: 6px; padding-bottom: 3px; }
.select { display: grid; grid-template-columns: 1fr 8px; align-items: center; height: 8px; background: #fff; border: 1px solid #ddd; }
.select select { grid-area: 1 / 1 / 2 / 3; appearance: none; width: 100%; height: 6px; padding-left: 2px; }
.select svg { grid-area: 1 / 2; width: 4px; height: 4px; pointer-events: none; }

.cut-pane { padding: 5px 5px 0 5px; display: flex; flex-direction: column; gap: 2px; }
.global, .stepover { display: flex; }
.global { padding-top: 2px; padding-bottom: 1px; }
.global .row { grid-template-columns: 36px 26px; padding-left: 16px; }
.global > svg, .stepover > svg { width: 70px; height: 36px; margin-left: 17px; }
.global > svg { height: 33px; }
.global .fields, .stepover .fields { flex: none; width: 78px; }
.control { --inset: 13px; padding-top: 2px; padding-right: 13px; padding-bottom: 3px; }
.direction { --inset: 4px; display: grid; grid-template-columns: 40fr 54fr 58fr; padding-top: 1px; padding-bottom: 2px; }
.control-cols { display: grid; grid-template-columns: 78fr 78fr; padding-top: 2px; }
.control-left { display: flex; flex-direction: column; gap: 2px; }
.control-cols > svg { width: 61px; height: 40px; margin: 3px 0 0 7px; }
.pair { --inset: 4px; display: grid; grid-template-columns: 40fr 36fr; padding-top: 2px; padding-bottom: 3px; }
.area { row-gap: 4px; }
.angle { --inset: 38px; padding-top: 1px; padding-right: 13px; padding-bottom: 2px; }
.stepover .row { grid-template-columns: 44px 26px; padding-left: 8px; }
.stepover { padding-top: 3px; padding-bottom: 2px; }

/* Summary */
.summary { padding: 14px 6px 0; }
.summary h1 { font: 700 18px/24px "EB Garamond", "Liberation Serif", serif; }
.summary dl { padding: 16px 6px 0; font-size: 13px; line-height: 16px; font-weight: 300; }
.summary dt, .summary dd { display: inline; }
.summary dd { color: #999; font-weight: 200; }
```
